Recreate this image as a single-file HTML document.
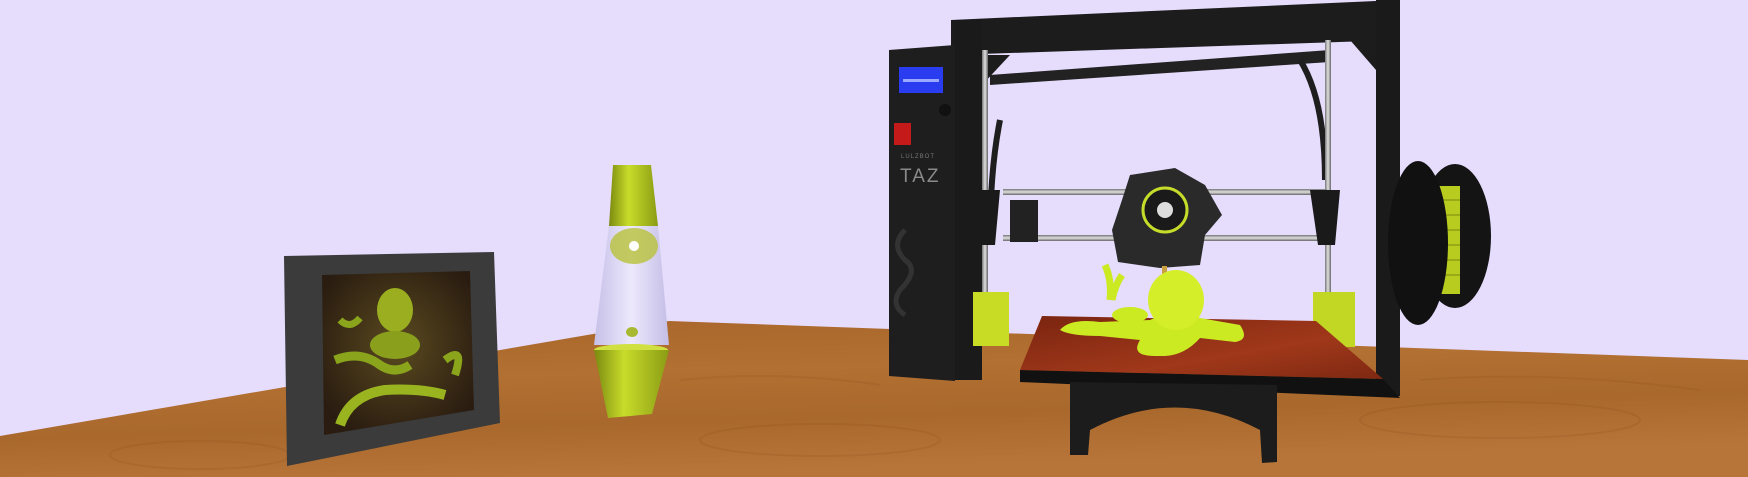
<!DOCTYPE html>
<html><head><meta charset="utf-8"><style>
html,body{margin:0;padding:0;background:#e6dcfc;overflow:hidden}
svg{display:block}
</style></head><body>
<svg width="1748" height="477" viewBox="0 0 1748 477" xmlns="http://www.w3.org/2000/svg">
<defs>
<linearGradient id="wood" x1="0" y1="0" x2="0.3" y2="1">
<stop offset="0" stop-color="#a8652a"/><stop offset="0.4" stop-color="#b27032"/><stop offset="0.7" stop-color="#a9682c"/><stop offset="1" stop-color="#b8753a"/></linearGradient>
<linearGradient id="grn" x1="0" y1="0" x2="1" y2="0">
<stop offset="0" stop-color="#7a8a10"/><stop offset="0.4" stop-color="#c8dc2a"/><stop offset="1" stop-color="#8a9c14"/></linearGradient>
<linearGradient id="glass" x1="0" y1="0" x2="1" y2="0">
<stop offset="0" stop-color="#c6c0e8"/><stop offset="0.5" stop-color="#ece8fc"/><stop offset="1" stop-color="#c4bde6"/></linearGradient>
<radialGradient id="pic" cx="0.5" cy="0.45" r="0.6">
<stop offset="0" stop-color="#5a4a20"/><stop offset="1" stop-color="#2a1c10"/></radialGradient>
<linearGradient id="bed" x1="0" y1="0" x2="1" y2="1">
<stop offset="0" stop-color="#7a2410"/><stop offset="0.6" stop-color="#a0381a"/><stop offset="1" stop-color="#7e2812"/></linearGradient>
<linearGradient id="rod" x1="0" y1="0" x2="0" y2="1">
<stop offset="0" stop-color="#777"/><stop offset="0.5" stop-color="#e0e0e0"/><stop offset="1" stop-color="#666"/></linearGradient>
<linearGradient id="rodv" x1="0" y1="0" x2="1" y2="0">
<stop offset="0" stop-color="#777"/><stop offset="0.5" stop-color="#e0e0e0"/><stop offset="1" stop-color="#666"/></linearGradient>
</defs>
<rect width="1748" height="477" fill="#e6dcfc"/>
<!-- table -->
<polygon points="0,436 669,321 1748,360 1748,477 0,477" fill="url(#wood)"/>
<g fill="none" stroke="#8a4c1c" stroke-width="2" opacity="0.18">
<ellipse cx="200" cy="455" rx="90" ry="14"/><ellipse cx="820" cy="440" rx="120" ry="16"/>
<ellipse cx="1500" cy="420" rx="140" ry="18"/><path d="M680 380 Q780 370 880 385"/><path d="M1420 380 Q1550 370 1700 390"/>
</g>
<!-- frame -->
<polygon points="284,256 494,252 500,423 287,466" fill="#3b3b3c"/>
<polygon points="322,275 470,271 474,410 324,435" fill="url(#pic)"/>
<ellipse cx="395" cy="310" rx="18" ry="22" fill="#9aae20"/>
<ellipse cx="395" cy="345" rx="25" ry="14" fill="#8aa01c"/>
<path d="M335 360 Q360 350 380 365 Q395 375 410 365" stroke="#8aa41c" stroke-width="9" fill="none"/>
<path d="M340 425 Q350 395 385 390 Q420 388 445 395" stroke="#9ab420" stroke-width="10" fill="none"/>
<path d="M445 360 Q465 345 455 375" stroke="#8aa41c" stroke-width="8" fill="none"/>
<path d="M340 320 Q350 330 360 318" stroke="#8aa41c" stroke-width="7" fill="none"/>
<!-- lava lamp -->
<polygon points="613,165 651,165 658,226 609,226" fill="url(#grn)"/>
<polygon points="609,226 658,226 669,345 594,345" fill="url(#glass)"/>
<ellipse cx="634" cy="246" rx="24" ry="18" fill="#b8c23a" opacity="0.8"/>
<circle cx="634" cy="246" r="5" fill="#fff"/>
<ellipse cx="632" cy="332" rx="6" ry="5" fill="#a8b830"/>
<ellipse cx="631" cy="350" rx="37" ry="6" fill="#d0e040"/>
<polygon points="594,350 669,350 652,414 608,418" fill="url(#grn)"/>
<!-- printer top frame -->
<polygon points="951,20 1399,0 1399,40 951,55" fill="#1c1c1c"/>
<polygon points="990,75 1330,50 1330,62 990,85" fill="#222"/>
<polygon points="982,55 1010,55 982,85" fill="#1c1c1c"/>
<polygon points="1376,40 1350,40 1376,70" fill="#1c1c1c"/>
<rect x="955" y="20" width="27" height="360" fill="#1a1a1a"/>
<rect x="1376" y="0" width="24" height="396" fill="#1a1a1a"/>
<path d="M1000 120 Q990 170 990 240" stroke="#1e1e1e" stroke-width="6" fill="none"/>
<path d="M1300 60 Q1325 100 1325 180" stroke="#1e1e1e" stroke-width="6" fill="none"/>
<!-- vertical rods -->
<rect x="982" y="50" width="6" height="270" fill="url(#rodv)"/>
<rect x="1325" y="40" width="6" height="280" fill="url(#rodv)"/>
<!-- left control panel -->
<polygon points="889,50 955,45 955,381 889,376" fill="#1e1e1e"/>
<rect x="899" y="67" width="44" height="26" fill="#2a3cf0"/>
<rect x="903" y="79" width="36" height="3" fill="#9aa8ff"/>
<circle cx="945" cy="110" r="6" fill="#111"/>
<rect x="894" y="123" width="17" height="22" fill="#c41a1a"/>
<text x="901" y="158" font-family="Liberation Sans, sans-serif" font-size="6" fill="#777" letter-spacing="1">LULZBOT</text>
<text x="900" y="182" font-family="Liberation Sans, sans-serif" font-size="19" fill="#8a8a8a" letter-spacing="2">TAZ</text>
<path d="M905 230 Q890 245 905 260 Q920 270 900 290 Q890 305 905 315" stroke="#333" stroke-width="5" fill="none"/>
<!-- horizontal rods -->
<rect x="1003" y="189" width="324" height="6" fill="url(#rod)"/>
<rect x="1003" y="235" width="324" height="6" fill="url(#rod)"/>
<!-- carriage blocks -->
<polygon points="975,190 1000,190 995,245 982,245" fill="#1a1a1a"/>
<polygon points="1310,190 1340,190 1335,245 1318,245" fill="#1a1a1a"/>
<rect x="1010" y="200" width="28" height="42" fill="#222"/>
<!-- extruder -->
<polygon points="1130,175 1175,168 1205,185 1222,215 1205,235 1200,265 1160,268 1118,262 1112,230 1122,200" fill="#2a2a2a"/>
<circle cx="1165" cy="210" r="22" fill="#1a1a1a" stroke="#c6dc2a" stroke-width="3"/>
<circle cx="1165" cy="210" r="8" fill="#ddd"/>
<rect x="1162" y="266" width="5" height="8" fill="#c8a040"/>
<!-- spool -->
<ellipse cx="1455" cy="236" rx="36" ry="72" fill="#141414"/>
<rect x="1424" y="186" width="36" height="108" fill="#b8cc20"/>
<g stroke="#8ea014" stroke-width="1.5"><line x1="1424" y1="200" x2="1460" y2="200"/><line x1="1424" y1="215" x2="1460" y2="215"/><line x1="1424" y1="230" x2="1460" y2="230"/><line x1="1424" y1="245" x2="1460" y2="245"/><line x1="1424" y1="260" x2="1460" y2="260"/><line x1="1424" y1="275" x2="1460" y2="275"/></g>
<ellipse cx="1418" cy="243" rx="30" ry="82" fill="#111"/>
<!-- yellow corner blocks -->
<rect x="973" y="292" width="36" height="54" fill="#c8dc26"/>
<rect x="1313" y="292" width="42" height="55" fill="#c2d624"/>
<!-- bed -->
<polygon points="1020,370 1042,316 1316,321 1383,379" fill="url(#bed)"/>
<polygon points="1020,370 1383,379 1400,398 1020,382" fill="#111"/>
<!-- stand -->
<path d="M1070 382 L1277 385 L1277 462 L1262 463 L1260 430 Q1175 385 1090 430 L1088 455 L1070 455 Z" fill="#1c1c1c"/>
<!-- octopus -->
<path d="M1060 330 Q1070 318 1100 322 L1150 320 Q1180 305 1200 318 L1240 325 Q1250 340 1235 342 L1200 338 Q1185 355 1165 356 L1155 356 Q1130 356 1140 340 L1100 336 Q1070 336 1060 330 Z" fill="#ccea22"/>
<ellipse cx="1176" cy="300" rx="28" ry="30" fill="#d4ee2a"/>
<path d="M1110 300 Q1112 280 1105 265 M1112 300 Q1115 285 1122 275" stroke="#ccea22" stroke-width="7" fill="none"/>
<ellipse cx="1130" cy="315" rx="18" ry="8" fill="#ccea22"/>
</svg>
</body></html>
